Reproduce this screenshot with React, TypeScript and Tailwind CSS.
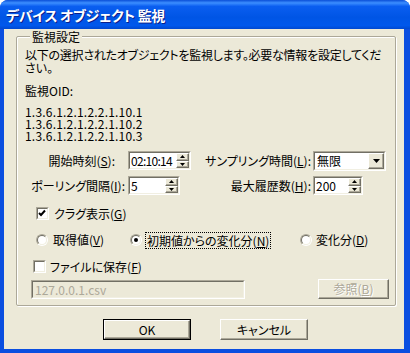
import type { ReactNode } from 'react'

const sunkenOuter = 'border border-t-[#aca899] border-l-[#aca899] border-b-white border-r-white'
const sunkenInner = 'border border-t-[#716f64] border-l-[#716f64] border-b-[#f1efe2] border-r-[#f1efe2]'
const raised = 'border border-t-white border-l-white border-b-[#716f64] border-r-[#716f64] shadow-[inset_-1px_-1px_#aca899] bg-[#ece9d8]'

function Sunken({ className, bg = 'bg-white', children }: { className: string; bg?: string; children?: ReactNode }) {
  return (
    <div className={`${sunkenOuter} ${className}`}>
      <div className={`${sunkenInner} ${bg} h-full w-full flex items-stretch`}>{children}</div>
    </div>
  )
}

function Arrow({ up, size = 'sm' }: { up?: boolean; size?: 'sm' | 'lg' }) {
  if (size === 'lg') {
    return (
      <svg width="7" height="4" viewBox="0 0 7 4">
        <path d="M0 0h7L3.5 4z" fill="#000" />
      </svg>
    )
  }
  return (
    <svg width="5" height="3" viewBox="0 0 5 3">
      <path d={up ? 'M2.5 0L5 3H0z' : 'M0 0h5L2.5 3z'} fill="#000" />
    </svg>
  )
}

function Spin() {
  return (
    <div className="w-[13px] flex flex-col">
      <div className={`${raised} flex-1 flex items-center justify-center`}>
        <Arrow up />
      </div>
      <div className={`${raised} flex-1 flex items-center justify-center`}>
        <Arrow />
      </div>
    </div>
  )
}

function Check({ checked, className }: { checked?: boolean; className: string }) {
  return (
    <Sunken className={`w-[13px] h-[13px] shrink-0 ${className}`}>
      {checked && (
        <svg width="9" height="9" viewBox="0 0 9 9" className="m-auto">
          <path d="M1 4l2 2 4-4.5" stroke="#000" strokeWidth="2" fill="none" />
        </svg>
      )}
    </Sunken>
  )
}

function Radio({ checked, className = '' }: { checked?: boolean; className?: string }) {
  return (
    <span className={`w-[12px] h-[12px] shrink-0 rounded-full ${sunkenOuter} ${className}`}>
      <span className={`w-full h-full rounded-full ${sunkenInner} bg-white flex items-center justify-center`}>
        {checked && <span className="w-[4px] h-[4px] rounded-full bg-black" />}
      </span>
    </span>
  )
}

export default function App() {
  return (
    <div className="w-[410px] h-[353px] flex flex-col bg-[#0a4ee0] rounded-t-[8px] overflow-hidden font-['Noto_Sans_CJK_JP',sans-serif] [font-feature-settings:'palt'] text-[12px] text-black">
      {/* Title bar */}
      <div className="h-[29px] shrink-0 flex items-center pl-[6px] pt-[2px] bg-[linear-gradient(180deg,#0a4fd8_0%,#3c8eff_10%,#0a5ef0_22%,#0055e5_60%,#0058ec_88%,#0048d0_100%)]">
        <span className="text-white font-bold text-[14px] tracking-[-0.3px] [text-shadow:1px_1px_#0a1f8a]">デバイス オブジェクト 監視</span>
      </div>

      {/* Body */}
      <div className="flex-1 ml-[4px] mr-[6px] mb-[4px] bg-[#ece9d8] flex flex-col">
        <fieldset className="ml-[12px] mr-[11px] pl-[8px] pr-[6px] pb-[6px] border border-[#aca899] rounded-[2px] shadow-[inset_1px_1px_0_#fff,1px_1px_0_#fff]">
          <legend className="ml-[5px] px-[2px] leading-[15px] bg-[#ece9d8]">監視設定</legend>

          <div className="pt-[4px] leading-[13px]">
            <p className="whitespace-nowrap tracking-[-0.25px]">以下の選択されたオブジェクトを監視します。必要な情報を設定してくだ</p>
            <p>さい。</p>
          </div>

          <p className="mt-[10px] leading-[13px]">監視OID:</p>
          <div className="mt-[9px] leading-[12px] tracking-[0.2px]">
            <p>1.3.6.1.2.1.2.2.1.10.1</p>
            <p>1.3.6.1.2.1.2.2.1.10.2</p>
            <p>1.3.6.1.2.1.2.2.1.10.3</p>
          </div>

          {/* Start time / sampling */}
          <div className="mt-[9px] h-[19px] flex items-center">
            <span className="w-[100px] pr-[10px] text-right whitespace-nowrap">
              開始時刻(<u>S</u>):
            </span>
            <Sunken className="ml-[3px] w-[63px] h-[19px]">
              <span className="flex-1 pl-[1px] leading-[15px] tracking-[-0.7px]">02:10:14</span>
              <Spin />
            </Sunken>
            <span className="w-[120px] text-right whitespace-nowrap">
              サンプリング時間(<u>L</u>):
            </span>
            <Sunken className="ml-[2px] w-[73px] h-[20px]">
              <span className="flex-1 pl-[2px] leading-[16px]">無限</span>
              <div className={`${raised} w-[16px] flex items-center justify-center`}>
                <Arrow size="lg" />
              </div>
            </Sunken>
          </div>

          {/* Polling / history */}
          <div className="mt-[6px] h-[19px] flex items-center">
            <span className="w-[100px] text-right whitespace-nowrap">
              ポーリング間隔(<u>I</u>):
            </span>
            <Sunken className="ml-[3px] w-[52px] h-[19px]">
              <span className="flex-1 pl-[1px] leading-[15px]">5</span>
              <Spin />
            </Sunken>
            <span className="w-[131px] text-right whitespace-nowrap">
              最大履歴数(<u>H</u>):
            </span>
            <Sunken className="ml-[2px] w-[50px] h-[19px]">
              <span className="flex-1 pl-[1px] leading-[15px]">200</span>
              <Spin />
            </Sunken>
          </div>

          <div className="mt-[11px] h-[15px] flex items-center">
            <Check checked className="ml-[11px]" />
            <span className="ml-[5px]">
              クラグ表示(<u>G</u>)
            </span>
          </div>

          {/* Value type */}
          <div className="mt-[10px] h-[18px] flex items-center">
            <div className="w-[105px] pl-[11px] flex items-center">
              <Radio />
              <span className="ml-[5px]">
                取得値(<u>V</u>)
              </span>
            </div>
            <div className="w-[170px] flex items-center">
              <Radio checked />
              <span className="ml-[3px] px-[1px] border border-dotted border-black leading-[15px]">
                初期値からの変化分(<u>N</u>)
              </span>
            </div>
            <div className="flex items-center">
              <Radio />
              <span className="ml-[4px]">
                変化分(<u>D</u>)
              </span>
            </div>
          </div>

          <div className="mt-[10px] h-[15px] flex items-center">
            <Check className="ml-[8px]" />
            <span className="ml-[4px]">
              ファイルに保存(<u>F</u>)
            </span>
          </div>

          <div className="mt-[5px] flex items-center">
            <Sunken className="ml-[6px] w-[214px] h-[19px]" bg="bg-[#ece9d8]">
              <span className="pl-[2px] leading-[15px] text-[#aca899]">127.0.0.1.csv</span>
            </Sunken>
            <button className={`${raised} ml-[73px] w-[71px] h-[20px] text-[#aca899] [text-shadow:1px_1px_#fff]`}>
              参照(<u>B</u>)
            </button>
          </div>
        </fieldset>

        {/* Dialog buttons */}
        <div className="mt-[13px] pl-[3px] flex justify-center gap-[29px]">
          <div className="w-[88px] h-[21px] border border-black">
            <button className={`${raised} w-full h-full leading-[15px]`}>OK</button>
          </div>
          <button className={`${raised} w-[88px] h-[21px] leading-[15px]`}>キャンセル</button>
        </div>
      </div>
    </div>
  )
}
